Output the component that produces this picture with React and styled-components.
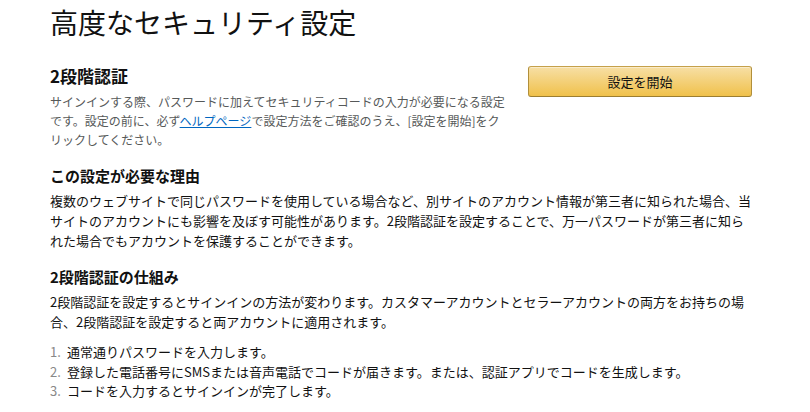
import React from 'react';
import styled, { createGlobalStyle } from 'styled-components';

const Global = createGlobalStyle`
	body {
		margin: 0;
		background: #fff;
		font-family: "Noto Sans CJK JP", "Noto Sans", sans-serif;
		color: #111;
	}
`;

const Page = styled.div`
	width: 705px;
	padding: 4px 0 0 50px;
`;
const Title = styled.h1`
	margin: 0 0 25px;
	font-size: 28px;
	font-weight: 400;
	line-height: 36px;
	color: #111;
`;
const TopRow = styled.div`
	display: grid;
	grid-template-columns: 460px 224px;
	column-gap: 18px;
	align-items: start;
	margin-bottom: 16px;
`;
const Heading = styled.h2`
	margin: 0 0 ${props => props.$big ? '5px' : '4px'};
	font-size: ${props => props.$big ? '17px' : '15px'};
	font-weight: 700;
	line-height: 22px;
`;
const Note = styled.p`
	margin: 0;
	font-size: 12px;
	line-height: 19px;
	color: #565959;
`;
const HelpLink = styled.a`
	color: #0066c0;
	text-decoration: underline;
`;
const StartButton = styled.button`
	width: 224px;
	height: 31px;
	margin-top: 1px;
	border: 1px solid #a88734;
	border-color: #c5a14b #b18f3b #9c7e31;
	border-radius: 3px;
	background: linear-gradient(to bottom, #f7dfa5, #f0c14b);
	box-shadow: inset 0 1px 0 rgba(255, 255, 255, 0.4);
	font-family: inherit;
	font-size: 13px;
	color: #111;
	cursor: pointer;
`;
const Section = styled.section`
	margin-bottom: 15px;
`;
const Body = styled.p`
	margin: 0;
	font-size: 13px;
	line-height: 20px;
	color: #111;
`;
const Steps = styled.ol`
	margin: 10px 0 0;
	padding: 0;
	list-style: none;
`;
const Step = styled.li`
	display: flex;
	font-size: 13px;
	line-height: 19.5px;
	color: #111;
`;
const StepNo = styled.span`
	width: 17px;
	color: #888;
`;

const steps = [
	'通常通りパスワードを入力します。',
	'登録した電話番号にSMSまたは音声電話でコードが届きます。または、認証アプリでコードを生成します。',
	'コードを入力するとサインインが完了します。',
];

export default function App() {
	return (
		<Page>
			<Global />
			<Title>高度なセキュリティ設定</Title>
			<TopRow>
				<div>
					<Heading $big>2段階認証</Heading>
					<Note>
						サインインする際、パスワードに加えてセキュリティコードの入力が必要になる設定です。設定の前に、必ず<HelpLink href="#">ヘルプページ</HelpLink>で設定方法をご確認のうえ、[設定を開始]をクリックしてください。
					</Note>
				</div>
				<StartButton>設定を開始</StartButton>
			</TopRow>
			<Section>
				<Heading>この設定が必要な理由</Heading>
				<Body>
					複数のウェブサイトで同じパスワードを使用している場合など、別サイトのアカウント情報が第三者に知られた場合、当サイトのアカウントにも影響を及ぼす可能性があります。2段階認証を設定することで、万一パスワードが第三者に知られた場合でもアカウントを保護することができます。
				</Body>
			</Section>
			<Section>
				<Heading>2段階認証の仕組み</Heading>
				<Body>
					2段階認証を設定するとサインインの方法が変わります。カスタマーアカウントとセラーアカウントの両方をお持ちの場合、2段階認証を設定すると両アカウントに適用されます。
				</Body>
				<Steps>
					{steps.map((text, index) => (
						<Step key={index}>
							<StepNo>{index + 1}.</StepNo>
							<span>{text}</span>
						</Step>
					))}
				</Steps>
			</Section>
		</Page>
	);
}
